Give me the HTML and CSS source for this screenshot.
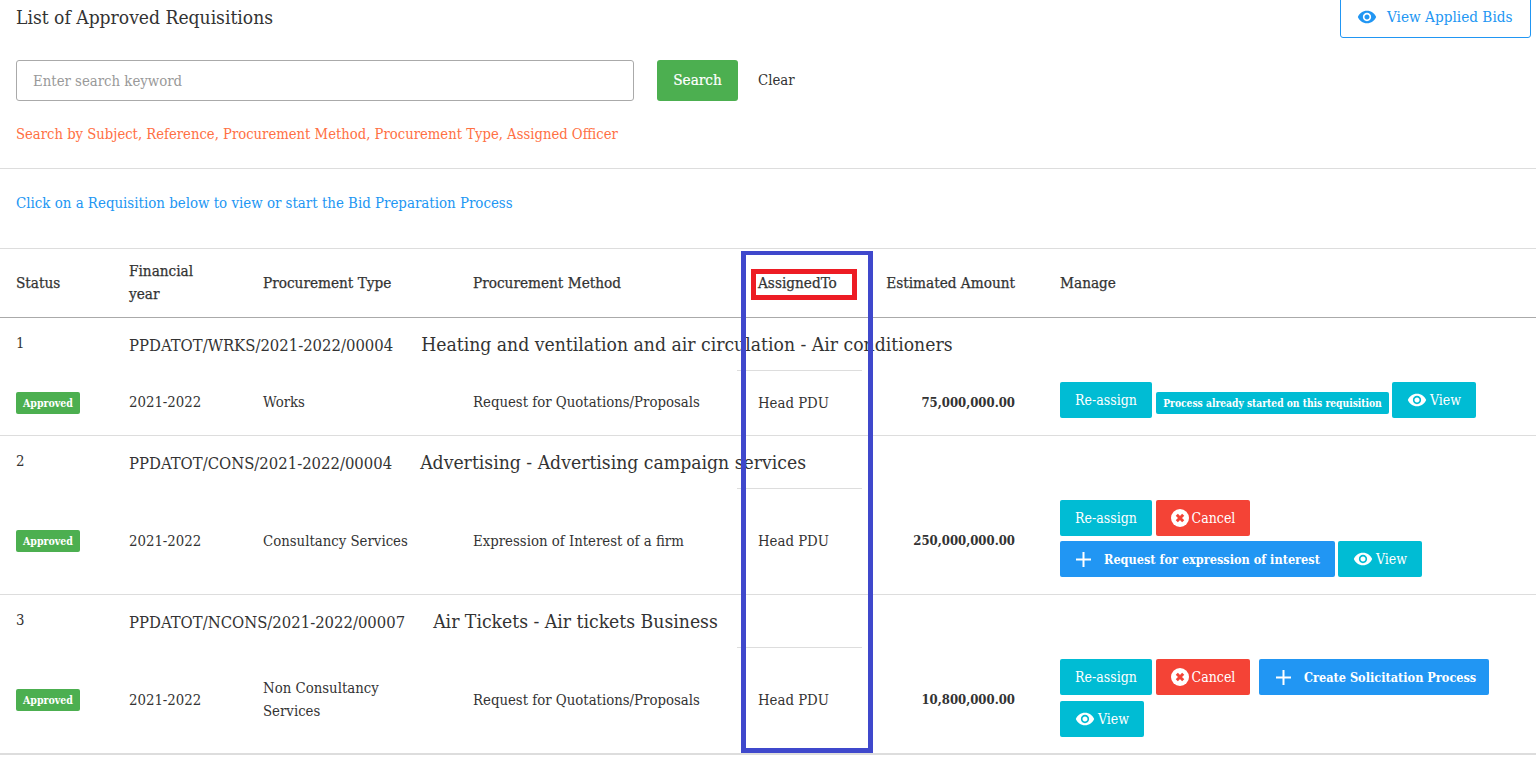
FILE: index.html
```html
<!DOCTYPE html>
<html lang="en">
<head>
	<meta charset="UTF-8">
	<title>List of Approved Requisitions</title>
	<link rel="stylesheet" href="styles.css">
</head>
<body>
	<svg class="icon-defs" width="0" height="0">
		<symbol id="eye" viewBox="0 0 24 24"><path fill="currentColor" d="M12 4.500C7 4.500 2.730 7.610 1 12c1.730 4.390 6 7.500 11 7.500s9.270-3.110 11-7.500c-1.730-4.390-6-7.500-11-7.500zM12 17c-2.760 0-5-2.240-5-5s2.240-5 5-5 5 2.240 5 5-2.240 5-5 5zm0-8c-1.660 0-3 1.340-3 3s1.340 3 3 3 3-1.340 3-3-1.340-3-3-3z"/></symbol>
		<symbol id="cancel" viewBox="0 0 18 18"><circle cx="9" cy="9" r="9" fill="#fff"/><path d="M5.800 5.800l6.400 6.400M12.200 5.800l-6.400 6.400" stroke="#f44336" stroke-width="3" fill="none"/></symbol>
		<symbol id="plus" viewBox="0 0 15 15"><path d="M7.500 0v15M0 7.500h15" stroke="#fff" stroke-width="2" fill="none"/></symbol>
	</svg>

	<div class="page">
		<div class="top">
			<h1 class="page-title">List of Approved Requisitions</h1>
			<a class="btn-applied" href="#"><svg class="icon-eye"><use href="#eye"/></svg>View Applied Bids</a>
		</div>

		<form class="search">
			<input class="search-input" type="text" placeholder="Enter search keyword">
			<button class="btn-search" type="button">Search</button>
			<a class="clear" href="#">Clear</a>
		</form>
		<p class="hint">Search by Subject, Reference, Procurement Method, Procurement Type, Assigned Officer</p>
		<hr class="divider">
		<p class="info">Click on a Requisition below to view or start the Bid Preparation Process</p>

		<table class="reqs">
			<colgroup>
				<col class="c-status"><col class="c-year"><col class="c-type"><col class="c-method"><col class="c-assigned"><col class="c-amount"><col class="c-manage">
			</colgroup>
			<thead>
				<tr>
					<th>Status</th>
					<th>Financial<br>year</th>
					<th>Procurement Type</th>
					<th>Procurement Method</th>
					<th class="assigned">AssignedTo</th>
					<th class="amount">Estimated Amount</th>
					<th>Manage</th>
				</tr>
			</thead>
			<tbody>
				<tr class="head-row">
					<td class="num">1</td>
					<td colspan="6"><span class="ref">PPDATOT/WRKS/2021-2022/00004</span><span class="subject">Heating and ventilation and air circulation - Air conditioners</span></td>
				</tr>
				<tr class="data-row">
					<td><span class="badge">Approved</span></td>
					<td>2021-2022</td>
					<td>Works</td>
					<td>Request for Quotations/Proposals</td>
					<td class="assigned">Head PDU</td>
					<td class="amount"><b>75,000,000.00</b></td>
					<td class="manage">
						<div class="btn-row">
							<a class="btn btn-info btn-reassign" href="#">Re-assign</a>
							<span class="note">Process already started on this requisition</span>
							<a class="btn btn-info btn-view" href="#"><svg class="icon-eye"><use href="#eye"/></svg>View</a>
						</div>
					</td>
				</tr>
				<tr class="head-row">
					<td class="num">2</td>
					<td colspan="6"><span class="ref">PPDATOT/CONS/2021-2022/00004</span><span class="subject">Advertising - Advertising campaign services</span></td>
				</tr>
				<tr class="data-row">
					<td><span class="badge">Approved</span></td>
					<td>2021-2022</td>
					<td>Consultancy Services</td>
					<td>Expression of Interest of a firm</td>
					<td class="assigned">Head PDU</td>
					<td class="amount"><b>250,000,000.00</b></td>
					<td class="manage">
						<div class="btn-row">
							<a class="btn btn-info btn-reassign" href="#">Re-assign</a>
							<a class="btn btn-danger" href="#"><svg class="icon-cancel"><use href="#cancel"/></svg>Cancel</a>
						</div>
						<div class="btn-row btn-row-next">
							<a class="btn btn-primary btn-request" href="#"><svg class="icon-plus"><use href="#plus"/></svg>Request for expression of interest</a>
							<a class="btn btn-info btn-view" href="#"><svg class="icon-eye"><use href="#eye"/></svg>View</a>
						</div>
					</td>
				</tr>
				<tr class="head-row">
					<td class="num">3</td>
					<td colspan="6"><span class="ref">PPDATOT/NCONS/2021-2022/00007</span><span class="subject">Air Tickets - Air tickets Business</span></td>
				</tr>
				<tr class="data-row last">
					<td><span class="badge">Approved</span></td>
					<td>2021-2022</td>
					<td>Non Consultancy<br>Services</td>
					<td>Request for Quotations/Proposals</td>
					<td class="assigned">Head PDU</td>
					<td class="amount"><b>10,800,000.00</b></td>
					<td class="manage">
						<div class="btn-row">
							<a class="btn btn-info btn-reassign" href="#">Re-assign</a>
							<a class="btn btn-danger" href="#"><svg class="icon-cancel"><use href="#cancel"/></svg>Cancel</a>
							<a class="btn btn-primary btn-create" href="#"><svg class="icon-plus"><use href="#plus"/></svg>Create Solicitation Process</a>
						</div>
						<div class="btn-row btn-row-wide">
							<a class="btn btn-info btn-view" href="#"><svg class="icon-eye"><use href="#eye"/></svg>View</a>
						</div>
					</td>
				</tr>
			</tbody>
		</table>

		<!-- hand drawn markers on the screenshot -->
		<div class="mark mark-column"></div>
		<div class="mark mark-header"></div>
	</div>
</body>
</html>
```

FILE: styles.css
```css
*{
	box-sizing: border-box;
}
html, body{
	height: 759px;
	overflow: hidden;
}
body{
	margin: 0;
	font: 14.8px/20px "DejaVu Serif Condensed", "DejaVu Serif", serif;
	color: #333;
	background: #fff;
}
a{
	text-decoration: none;
	color: inherit;
}
.icon-defs{
	position: absolute;
}
.page{
	position: relative;
}

/* top */
.top{
	display: flex;
	justify-content: space-between;
	height: 38px;
	padding: 0 5px 0 16px;
}
.page-title{
	margin: 0;
	font-size: 19.100px;
	font-weight: normal;
	line-height: 35px;
}
.btn-applied{
	display: flex;
	align-items: center;
	width: 191px;
	height: 46px;
	margin-top: -8px;
	padding: 4px 0 0 16px;
	border: 1px solid #2196f3;
	border-radius: 3px;
	color: #2196f3;
	font-size: 15.200px;
}
.btn-applied .icon-eye{
	margin-right: 10px;
}

/* search */
.search{
	display: flex;
	align-items: center;
	margin: 22px 0 0 16px;
}
.search-input{
	width: 618px;
	height: 41px;
	padding: 0 16px;
	border: 1px solid #aaa;
	border-radius: 3px;
	font: inherit;
}
.search-input::placeholder{
	color: #999;
}
.btn-search{
	width: 81px;
	height: 41px;
	margin-left: 23px;
	padding: 0 0 2px;
	border: 0;
	border-radius: 3px;
	background: #4caf50;
	color: #fff;
	font: inherit;
	font-size: 15.200px;
	-webkit-text-stroke: .2px #fff;
}
.clear{
	margin: 0 0 2px 20px;
}
.hint{
	margin: 23px 0 24px 16px;
	color: #ff7043;
	font-size: 14.700px;
}
.divider{
	height: 1px;
	margin: 0;
	border: 0;
	background: #ddd;
}
.info{
	margin: 24px 0 35px 16px;
	color: #2196f3;
	font-size: 14.900px;
}

/* table */
.reqs{
	width: 1536px;
	table-layout: fixed;
	border-collapse: separate;
	border-spacing: 0;
}
.c-status{ width: 113px; }
.c-year{ width: 134px; }
.c-type{ width: 210px; }
.c-method{ width: 280px; }
.c-assigned{ width: 125px; }
.c-amount{ width: 182px; }
.c-manage{ width: 492px; }
.reqs th{
	height: 70px;
	padding: 0 16px;
	border-top: 1px solid #ddd;
	border-bottom: 1px solid #aaa;
	font-size: 15.200px;
	font-weight: normal;
	line-height: 23px;
	text-align: left;
	-webkit-text-stroke: .25px #333;
}
.reqs td{
	padding: 0 16px;
}
.reqs .assigned{
	padding-left: 21px;
	padding-right: 0;
}
.reqs .amount{
	padding-right: 29px;
	padding-left: 0;
	text-align: right;
}
.head-row td{
	height: 52px;
	padding-top: 2px;
}
.head-row .num{
	padding-bottom: 4px;
}
.ref{
	margin-right: 28px;
	font-size: 16.500px;
}
.subject{
	font-size: 19.200px;
}
.data-row td{
	padding-bottom: 2px;
	border-bottom: 1px solid #ddd;
	line-height: 23px;
}
.data-row b{
	font-size: 13px;
}
.data-row .assigned{
	border-top: 1px solid #ddd;
}
.data-row.last td{
	border-bottom: 2px solid #ddd;
}
.reqs .manage{
	padding: 12px 0 17px 16px;
}
.data-row.last .manage{
	padding-bottom: 16px;
}
.badge{
	display: inline-block;
	width: 64px;
	height: 22px;
	border-radius: 2px;
	background: #4caf50;
	color: #fff;
	font-size: 10.500px;
	font-weight: bold;
	line-height: 22px;
	text-align: center;
	vertical-align: middle;
}

/* buttons */
.btn{
	display: flex;
	align-items: center;
	justify-content: center;
	height: 36px;
	border-radius: 2px;
	color: #fff;
	font-size: 14px;
}
.btn-row{
	display: flex;
	align-items: flex-start;
}
.btn-row-next{
	margin-top: 5px;
}
.btn-row-wide{
	margin-top: 6px;
}
.btn-info{
	background: #00bcd4;
}
.btn-danger{
	width: 94px;
	margin-left: 4px;
	background: #f44336;
}
.btn-primary{
	justify-content: flex-start;
	padding-left: 16px;
	background: #2196f3;
	font-size: 12.600px;
	font-weight: bold;
}
.btn-reassign{
	width: 92px;
}
.btn-view{
	width: 84px;
}
.btn-request{
	width: 275px;
	margin-right: 3px;
}
.btn-create{
	width: 230px;
	margin-left: 9px;
	padding-left: 17px;
}
.note{
	width: 233px;
	height: 22px;
	margin: 10px 3px 0 4px;
	border-radius: 2px;
	background: #00bcd4;
	color: #fff;
	font-size: 10.200px;
	font-weight: bold;
	line-height: 22px;
	text-align: center;
}
.icon-eye{
	width: 20px;
	height: 20px;
	margin-right: 3px;
}
.icon-cancel{
	width: 18px;
	height: 18px;
	margin-right: 3px;
}
.icon-plus{
	width: 15px;
	height: 15px;
	margin-right: 13px;
}

/* markers */
.mark{
	position: absolute;
}
.mark-column{
	left: 741px;
	top: 251px;
	width: 132px;
	height: 502px;
	border: 5px solid #3f48cc;
	border-top-width: 4px;
}
.mark-header{
	left: 751px;
	top: 269px;
	width: 106px;
	height: 31px;
	border: 5px solid #ed1c24;
}
```
